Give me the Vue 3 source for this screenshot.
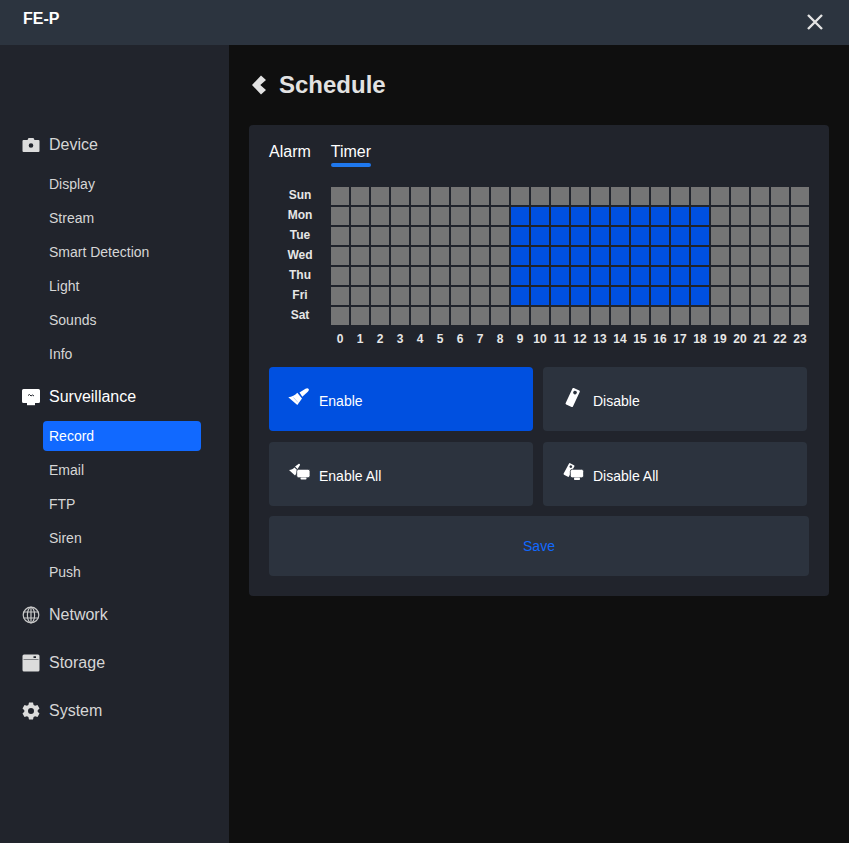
<template>
  <div class="app">
    <header class="topbar">
      <span class="title">FE-P</span>
      <svg class="close" viewBox="0 0 16 16" width="16" height="16">
        <path d="M1 1l14 14M15 1L1 15" stroke="#e4e4e4" stroke-width="2.4" fill="none" />
      </svg>
    </header>
    <div class="body">
      <aside class="sidebar">
        <div v-for="group in menu" :key="group.name" class="group">
          <div class="group-head" :class="{ current: group.name === 'Surveillance' }">
            <svg class="group-icon" viewBox="0 0 18 18" width="18" height="18" v-html="group.icon"></svg>
            <span>{{ group.name }}</span>
          </div>
          <ul v-if="group.items" class="sub">
            <li v-for="item in group.items" :key="item" :class="{ active: item === 'Record' }">{{ item }}</li>
          </ul>
        </div>
      </aside>
      <main class="content">
        <div class="page-head">
          <svg viewBox="0 0 16 22" width="16" height="22">
            <polygon points="1,11 10,1.500 15,6 9.300,11 15,16 10,20.500" fill="#e2e2e2" />
          </svg>
          <h1>Schedule</h1>
        </div>
        <section class="card">
          <div class="tabs">
            <span class="tab">Alarm</span>
            <span class="tab selected">Timer</span>
          </div>
          <div class="schedule">
            <template v-for="(day, d) in days" :key="day">
              <div class="day">{{ day }}</div>
              <div class="cells">
                <span
                  v-for="h in 24"
                  :key="h"
                  class="cell"
                  :class="{ on: isOn(d, h - 1) }"
                ></span>
              </div>
            </template>
            <div></div>
            <div class="hours">
              <span v-for="h in 24" :key="h">{{ h - 1 }}</span>
            </div>
          </div>
          <div class="actions">
            <button class="action primary">
              <svg viewBox="0 0 22 22" width="22" height="22">
                <path d="M11.500 4.500L17.500.8Q19.600-.2 20.600.9 21.400 2.200 19.800 3.800L14.300 8.800z" fill="#fff" />
                <path d="M.3 9.300C4 9 7 7.200 9.300 4.800L14 10.600 9.300 17z" fill="#fff" />
                <path d="M5.500 9.500l4.500 5" stroke="#9db8f0" stroke-width=".7" fill="none" />
              </svg>
              <span>Enable</span>
            </button>
            <button class="action">
              <svg viewBox="0 0 22 22" width="22" height="22">
                <path transform="rotate(25 10.700 9.500)" fill-rule="evenodd" d="M7.700.5h6a1 1 0 0 1 1 1v16a1 1 0 0 1-1 1h-6a1 1 0 0 1-1-1v-16a1 1 0 0 1 1-1zM10.700 2.200a1.800 1.800 0 1 0 0 3.600 1.800 1.800 0 0 0 0-3.600z" fill="#fff" />
              </svg>
              <span>Disable</span>
            </button>
            <button class="action lower">
              <svg viewBox="0 0 22 22" width="22" height="22">
                <path d="M1 7C3.500 6.800 5 6 6.500 4.500L10 8 7 12.500z" fill="#fff" />
                <path d="M7 3.500L10.500 1C11.500.5 12.500 1.500 11.800 2.500L9.500 6z" fill="#fff" />
                <rect x="8.700" y="6.300" width="13.300" height="8.500" rx="2" fill="#fff" stroke="#2c333e" stroke-width=".8" />
                <rect x="12.500" y="14.500" width="6" height="2" rx=".8" fill="#fff" />
              </svg>
              <span>Enable All</span>
            </button>
            <button class="action lower">
              <svg viewBox="0 0 22 22" width="22" height="22">
                <path transform="rotate(28 7 7)" fill-rule="evenodd" d="M4.800.5h4.400a.8.8 0 0 1 .8.8v11.400a.8.8 0 0 1-.8.8H4.800a.8.8 0 0 1-.8-.8V1.300a.8.8 0 0 1 .8-.8zM7 1.800a1.300 1.300 0 1 0 0 2.600 1.300 1.300 0 0 0 0-2.600z" fill="#fff" />
                <rect x="8.300" y="6.300" width="13.300" height="8.500" rx="2" fill="#fff" stroke="#2c333e" stroke-width=".8" />
                <rect x="12" y="14.500" width="6" height="2.500" rx=".8" fill="#fff" />
              </svg>
              <span>Disable All</span>
            </button>
          </div>
          <button class="save">Save</button>
        </section>
      </main>
    </div>
  </div>
</template>

<script setup>
const days = ['Sun', 'Mon', 'Tue', 'Wed', 'Thu', 'Fri', 'Sat']

// weekdays, 9:00 to 18:00
const isOn = (day, hour) => day >= 1 && day <= 5 && hour >= 9 && hour <= 18

const menu = [
  {
    name: 'Device',
    icon: '<path fill="#dcdcdc" fill-rule="evenodd" d="M1.500 4H5.500l1-2h5l1 2h4a1 1 0 0 1 1 1v10a1 1 0 0 1-1 1h-15a1 1 0 0 1-1-1V5a1 1 0 0 1 1-1zM9 7.200a2.300 2.300 0 1 0 0 4.600 2.300 2.300 0 0 0 0-4.600z"/>',
    items: ['Display', 'Stream', 'Smart Detection', 'Light', 'Sounds', 'Info'],
  },
  {
    name: 'Surveillance',
    icon: '<path fill="#fff" fill-rule="evenodd" d="M1.500 1h15A1.500 1.500 0 0 1 18 2.500v11a1.500 1.500 0 0 1-1.500 1.500h-15A1.500 1.500 0 0 1 0 13.500v-11A1.500 1.500 0 0 1 1.500 1z"/><rect x="5" y="15" width="8" height="2.200" fill="#fff"/><path d="M6 7.500l1.500-1 1.500 1.500 1.500-1 1.500 1" stroke="#21242c" stroke-width="1" fill="none"/>',
    items: ['Record', 'Email', 'FTP', 'Siren', 'Push'],
  },
  {
    name: 'Network',
    icon: '<g fill="none" stroke="#c8c8c8" stroke-width="1.200"><circle cx="9" cy="9" r="7.800"/><ellipse cx="9" cy="9" rx="3.600" ry="7.800"/><path d="M9 1v16M1.500 6h15M1.500 12h15"/></g>',
  },
  {
    name: 'Storage',
    icon: '<path fill="#dcdcdc" fill-rule="evenodd" d="M2 .500h14A1.500 1.500 0 0 1 17.500 2v14a1.500 1.500 0 0 1-1.500 1.500H2A1.500 1.500 0 0 1 .500 16V2A1.500 1.500 0 0 1 2 .500zM1.500 5v.6h15V5zM11.500 2.300v1.800h2.500V2.300z"/>',
  },
  {
    name: 'System',
    icon: '<path fill="#dcdcdc" fill-rule="evenodd" d="M7 .500h4l.600 2.500 1.500.800 2.400-.800 2 3.500-1.800 1.700v1.600l1.800 1.700-2 3.500-2.400-.800-1.500.800-.600 2.500H7l-.600-2.500-1.500-.800-2.400.800-2-3.500 1.800-1.700V8.200L.500 6.500l2-3.500 2.400.800L6.400 3zM9 6a3 3 0 1 0 0 6 3 3 0 0 0 0-6z"/>',
  },
]
</script>

<style scoped>
.app {
  width: 849px;
  height: 843px;
  display: flex;
  flex-direction: column;
  background: #0f0f0f;
  font-family: "Liberation Sans", Arial, sans-serif;
  overflow: hidden;
}

.topbar {
  height: 45px;
  flex: none;
  display: flex;
  align-items: center;
  justify-content: space-between;
  padding: 0 26px 4px 23px;
  box-sizing: border-box;
  background: #2c343f;
}

.title {
  font-size: 16px;
  font-weight: bold;
  color: #fff;
  position: relative;
  top: -2px;
}

.close {
  position: relative;
  top: 1px;
}

.body {
  flex: 1;
  display: flex;
  min-height: 0;
}

.sidebar {
  width: 229px;
  flex: none;
  box-sizing: border-box;
  padding-top: 75px;
  background: #21242c;
}

.group-head {
  height: 48px;
  box-sizing: border-box;
  padding: 2px 0 0 22px;
  display: flex;
  align-items: center;
  gap: 9px;
  font-size: 16px;
  color: #d6d6d6;
}

.group-head.current {
  color: #fff;
}

.sub {
  list-style: none;
  margin: 1px 0 3px;
  padding: 0;
  display: flex;
  flex-direction: column;
  gap: 4px;
}

.sub li {
  height: 30px;
  line-height: 30px;
  width: 158px;
  margin-left: 43px;
  padding-left: 6px;
  box-sizing: border-box;
  border-radius: 4px;
  font-size: 14px;
  color: #d6d6d6;
}

.sub li.active {
  background: #1169ff;
  color: #fff;
}

.content {
  flex: 1;
  padding: 0 20px;
}

.page-head {
  height: 80px;
  display: flex;
  align-items: center;
  gap: 12px;
  margin-left: 2px;
}

h1 {
  margin: 0;
  font-size: 24px;
  font-weight: bold;
  color: #e2e2e2;
}

.card {
  height: 471px;
  box-sizing: border-box;
  padding: 16px 20px 20px;
  border-radius: 4px;
  background: #21242c;
}

.tabs {
  display: flex;
  gap: 20px;
  height: 46px;
}

.tab {
  height: 26px;
  line-height: 22px;
  font-size: 16px;
  color: #fff;
}

.tab.selected {
  position: relative;
}

.tab.selected::after {
  content: "";
  position: absolute;
  left: 0;
  right: 0;
  bottom: 0;
  height: 4px;
  border-radius: 2px;
  background: #1f78ee;
}

.schedule {
  display: grid;
  grid-template-columns: 62px 478px;
  row-gap: 2px;
}

.day {
  text-align: center;
  font-size: 12px;
  font-weight: bold;
  line-height: 16px;
  color: #e6e6e6;
}

.cells {
  display: flex;
  gap: 2px;
}

.cell {
  width: 18px;
  height: 18px;
  background: #757575;
}

.cell.on {
  background: #0050e0;
}

.hours {
  display: flex;
  gap: 2px;
  margin-top: 5px;
  font-size: 12px;
  font-weight: bold;
  color: #e6e6e6;
}

.hours span {
  width: 18px;
  text-align: center;
}

.actions {
  display: grid;
  grid-template-columns: 264px 264px;
  gap: 11px 10px;
  margin-top: 21px;
}

.action {
  height: 64px;
  display: flex;
  align-items: center;
  gap: 9px;
  padding: 0 0 0 19px;
  border: none;
  border-radius: 4px;
  background: #2c333e;
  font-family: inherit;
  font-size: 14px;
  color: #fff;
}

.action span {
  position: relative;
  top: 2px;
}

.action.primary {
  background: #0050e0;
}

.save {
  display: block;
  width: 540px;
  height: 60px;
  margin-top: 10px;
  border: none;
  border-radius: 4px;
  background: #2c333e;
  font-family: inherit;
  font-size: 14px;
  color: #1169ff;
}
</style>

<style>
html,
body {
  margin: 0;
  background: #0f0f0f;
}
</style>
